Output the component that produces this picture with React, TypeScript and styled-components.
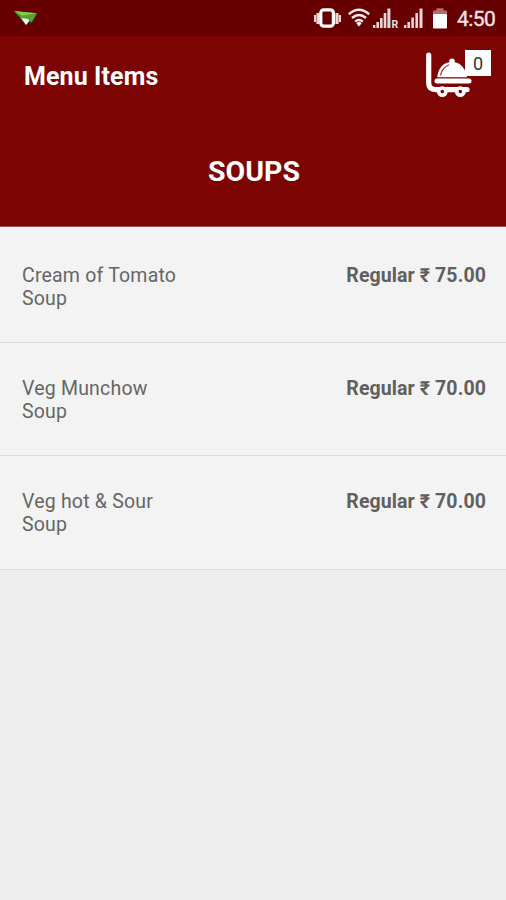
import React from 'react';
import styled, { createGlobalStyle } from 'styled-components';

const Global = createGlobalStyle`
  * { box-sizing: border-box; }
  html, body { margin: 0; background: #eeeeee; }
  body { font-family: Roboto, "Liberation Sans", sans-serif; }
`;

const Screen = styled.div`
  display: flex;
  flex-direction: column;
  width: 506px;
  height: 900px;
  overflow: hidden;
  background: #eeeeee;
`;

const StatusBar = styled.div`
  display: flex;
  justify-content: space-between;
  height: 36px;
  background: #670001;
`;

const StatusRight = styled.div`
  display: flex;
`;

const Clock = styled.span`
  width: 49px;
  font-size: 21px;
  line-height: 38px;
  letter-spacing: -0.6px;
  color: #f6e6e6;
  -webkit-text-stroke: 0.3px #f6e6e6;
  white-space: nowrap;
`;

const Toolbar = styled.header`
  display: flex;
  justify-content: space-between;
  height: 81px;
  padding: 0 12px 0 24px;
  background: #7c0504;
`;

const Title = styled.h1`
  margin: 0;
  font-size: 25px;
  font-weight: 700;
  line-height: 82px;
  letter-spacing: 0.1px;
  color: #fff;
`;

const CartButton = styled.div`
  position: relative;
  width: 70px;
  height: 70px;
`;

const Badge = styled.span`
  position: absolute;
  left: 41px;
  top: 14px;
  width: 26px;
  height: 26px;
  background: #fff;
  color: #333;
  font-size: 18px;
  line-height: 27px;
  text-align: center;
`;

const Category = styled.h2`
  height: 110px;
  margin: 0;
  padding-left: 2px;
  border-bottom: 1px solid #9c5654;
  background: #7c0504;
  color: #fff;
  font-size: 28.5px;
  font-weight: 700;
  line-height: 110px;
  text-align: center;
`;

const List = styled.ul`
  display: flex;
  flex-direction: column;
  margin: 0;
  padding: 0;
  list-style: none;
`;

const Row = styled.li<{ $height: number; $top: number }>`
  display: flex;
  justify-content: space-between;
  height: ${(p) => p.$height}px;
  padding: ${(p) => p.$top}px 20px 0 22px;
  border-bottom: 1px solid #dcdcdc;
  background: #f3f3f3;
  color: #666;
  font-size: 19.5px;
  line-height: 23.4px;
`;

const Name = styled.span`
  width: 165px;
  letter-spacing: 0.2px;
`;

const Price = styled.span`
  font-weight: 700;
  letter-spacing: 0.1px;
  color: #606060;
  white-space: nowrap;
`;

const items = [
  { name: 'Cream of Tomato Soup', price: '75.00', height: 116, top: 37 },
  { name: 'Veg Munchow Soup', price: '70.00', height: 113, top: 34 },
  { name: 'Veg hot & Sour Soup', price: '70.00', height: 114, top: 34 },
];

const PlaneIcon = () => (
  <svg width="50" height="36" viewBox="0 0 50 36">
    <path d="M14 11L37 13.5L32 23L26 25L21 20Z" fill="#294b12" />
    <path d="M14 11L37 13.3L31.5 22.5L27 18.5L21 18Z" fill="#55a52d" />
    <path d="M15 11.3L37 13.2L22 15.5Z" fill="#86cf50" />
    <path d="M21 18L28 18.8L29.5 21L26 25Z" fill="#f4f7ee" />
    <path d="M28.5 22L31 22.5L28 24.3Z" fill="#1b1010" />
  </svg>
);

const StatusIcons = () => (
  <svg width="143" height="36" viewBox="314 0 143 36">
    <g fill="#eed9d9">
      <rect x="314" y="15" width="2" height="7" />
      <rect x="316.4" y="13" width="3.2" height="11" />
      <rect x="335.4" y="13" width="3.2" height="11" />
      <rect x="339" y="15" width="2" height="7" />
    </g>
    <rect x="320.8" y="9.8" width="12.6" height="16.4" rx="3" fill="none" stroke="#fff" strokeWidth="3.2" />
    <g fill="none" stroke="#f8eaea" strokeWidth="2.5">
      <path d="M348.8 14.2Q359 5.4 369.2 14.2" />
      <path d="M352 18Q359 12 366 18" />
      <path d="M355.2 21.6Q359 18.3 362.8 21.6" />
    </g>
    <path d="M356.3 23.2Q359 21 361.7 23.2L359 26.6Z" fill="#fff" />
    <g fill="#ead5d5">
      <rect x="373" y="25" width="2.4" height="3" />
      <rect x="376.4" y="22" width="2.6" height="6" />
      <rect x="380" y="18" width="2.6" height="10" />
      <rect x="383.7" y="13" width="2.6" height="15" />
      <rect x="387.4" y="8.5" width="3" height="19.5" />
      <rect x="404" y="25" width="2.4" height="3" />
      <rect x="407.4" y="22" width="2.6" height="6" />
      <rect x="411.3" y="17.5" width="2.6" height="10.5" />
      <rect x="415.4" y="13" width="2.6" height="15" />
      <rect x="419.5" y="8.5" width="3" height="19.5" />
    </g>
    <text x="391.5" y="28" fontSize="10.5" fontWeight="700" fontFamily="Roboto, sans-serif" fill="#f0dede">R</text>
    <path d="M433 14V10.5H436.4V8.3H443.5V10.5H447V14Z" fill="#b56b6b" />
    <rect x="433" y="14" width="14" height="14.5" rx="0.8" fill="#fff" />
  </svg>
);

const CartIcon = () => (
  <svg width="50" height="66" viewBox="424 36 50 66">
    <path d="M428.7 55V83Q428.7 89.6 436 89.6H467" fill="none" stroke="#fff" strokeWidth="5.2" strokeLinecap="round" />
    <path d="M437 81H469" stroke="#fff" strokeWidth="5" strokeLinecap="round" />
    <path d="M437.3 77.2C438 68.5 443 63 449.4 62.2Q448.6 58.6 452 58.6Q455.4 58.6 454.6 62.2C461 63.2 466 69 467 77.2Z" fill="#fff" />
    <path d="M440.5 75.5C441.5 70.5 444 67 449 64.8" fill="none" stroke="#9b302f" strokeWidth="1.2" />
    <g fill="#7c0504" stroke="#fff" strokeWidth="3.6">
      <circle cx="442.3" cy="91.6" r="3.6" />
      <circle cx="460.3" cy="91.6" r="3.6" />
    </g>
  </svg>
);

export default function App() {
  return (
    <>
      <Global />
      <Screen>
        <StatusBar>
          <PlaneIcon />
          <StatusRight>
            <StatusIcons />
            <Clock>4:50</Clock>
          </StatusRight>
        </StatusBar>
        <Toolbar>
          <Title>Menu Items</Title>
          <CartButton>
            <CartIcon />
            <Badge>0</Badge>
          </CartButton>
        </Toolbar>
        <Category>SOUPS</Category>
        <List>
          {items.map((item) => (
            <Row key={item.name} $height={item.height} $top={item.top}>
              <Name>{item.name}</Name>
              <Price>Regular ₹ {item.price}</Price>
            </Row>
          ))}
        </List>
      </Screen>
    </>
  );
}
